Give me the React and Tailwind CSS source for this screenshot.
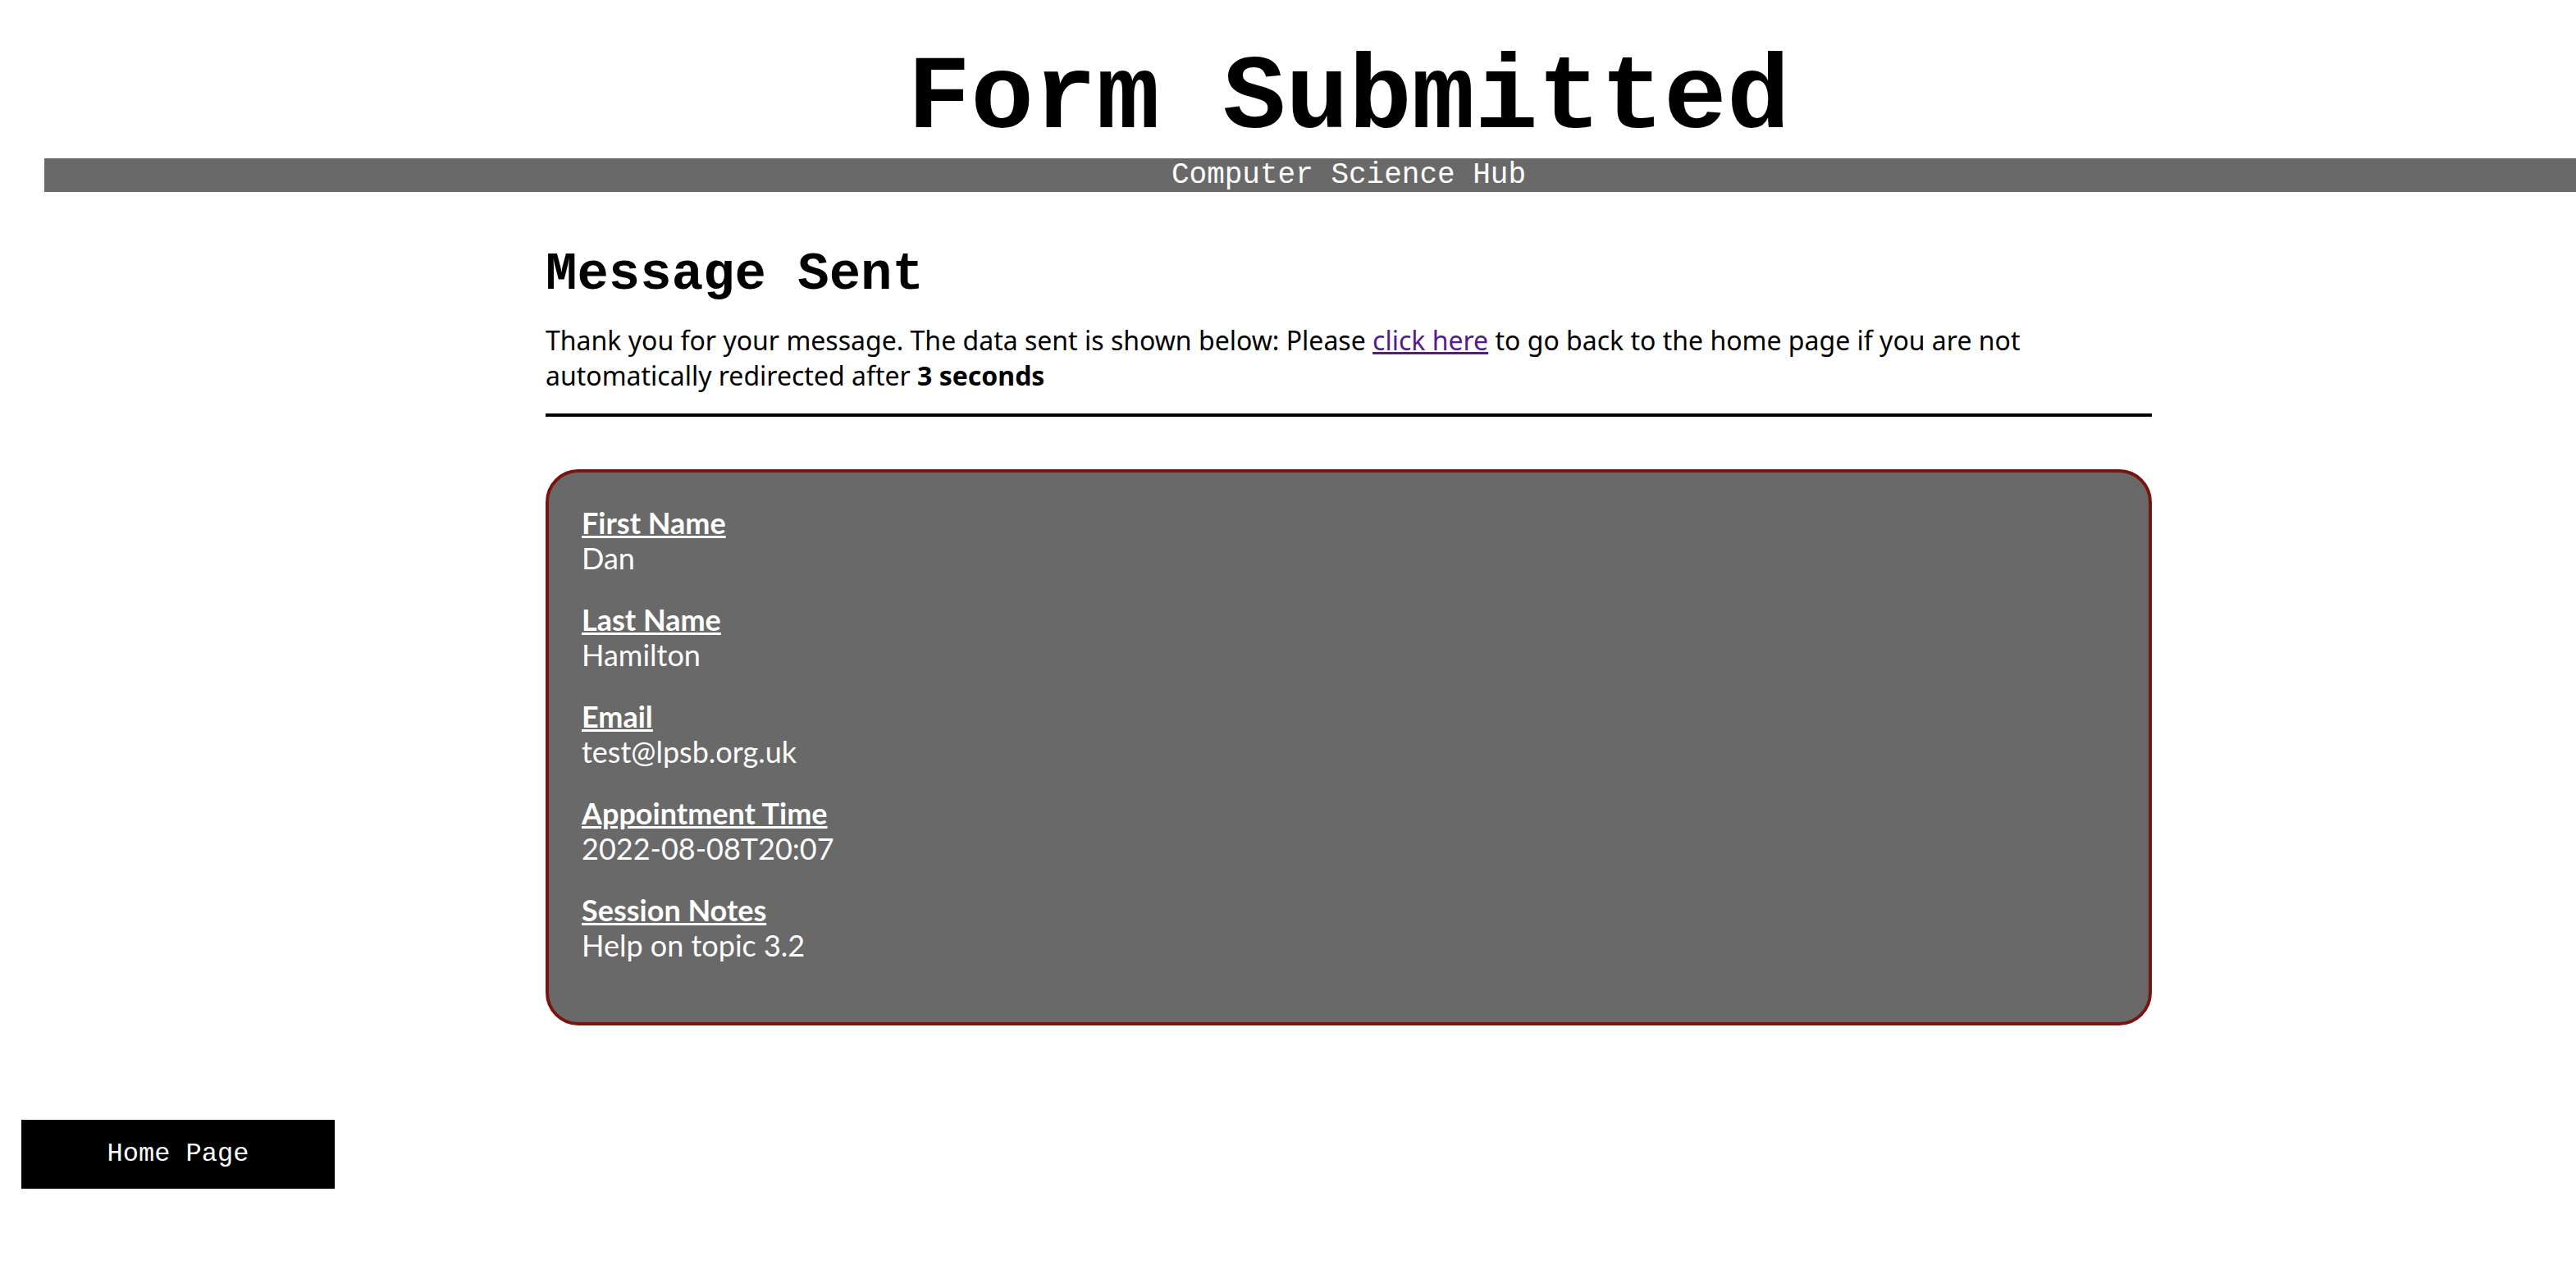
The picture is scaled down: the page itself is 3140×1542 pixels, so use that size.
export default function App() {
  const fields = [
    { label: "First Name", value: "Dan" },
    { label: "Last Name", value: "Hamilton" },
    { label: "Email", value: "test@lpsb.org.uk" },
    { label: "Appointment Time", value: "2022-08-08T20:07" },
    { label: "Session Notes", value: "Help on topic 3.2" },
  ];

  const mono =
    "font-['Courier_New','Nimbus_Mono_PS','Nimbus_Mono_L','FreeMono','Courier','Liberation_Mono',monospace]";

  return (
    <div className="min-h-screen bg-white text-black font-['Noto_Sans',sans-serif] overflow-hidden">
      {/* cabecera */}
      <h1
        className={`pl-[148px] pt-[48px] text-center ${mono} font-bold text-[128px] leading-[145px]`}
      >
        Form Submitted
      </h1>
      <div
        className={`ml-[54px] pl-[94px] bg-[#696969] text-center text-white ${mono} text-[36px] leading-[41px]`}
      >
        Computer Science Hub
      </div>

      <div className="pl-[148px]">
        <div className="mx-auto w-[1958px]">
          <h2 className={`mt-[65px] ${mono} font-bold text-[64px] leading-[72px]`}>
            Message Sent
          </h2>
          <p className="mt-[22px] text-[32px] leading-[43px]">
            Thank you for your message. The data sent is shown below: Please{" "}
            <a href="#" className="text-[#551a8b] underline">
              click here
            </a>{" "}
            to go back to the home page if you are not automatically redirected
            after <b className="font-bold">3 seconds</b>
          </p>
          <hr className="mt-[25px] border-0 border-t-4 border-black" />

          <div className="mt-[64px] rounded-[40px] border-4 border-[#7a1411] bg-[#696969] p-[40px] font-['Lato',sans-serif] text-white text-[36px] leading-[43px]">
            {fields.map((f) => (
              <div key={f.label} className="mb-[32px]">
                <div className="font-bold underline">{f.label}</div>
                <div>{f.value}</div>
              </div>
            ))}
          </div>
        </div>
      </div>

      <button
        className={`mt-[115px] ml-[26px] block w-[382px] h-[84px] bg-black text-white ${mono} text-[32px]`}
      >
        Home Page
      </button>
    </div>
  );
}
